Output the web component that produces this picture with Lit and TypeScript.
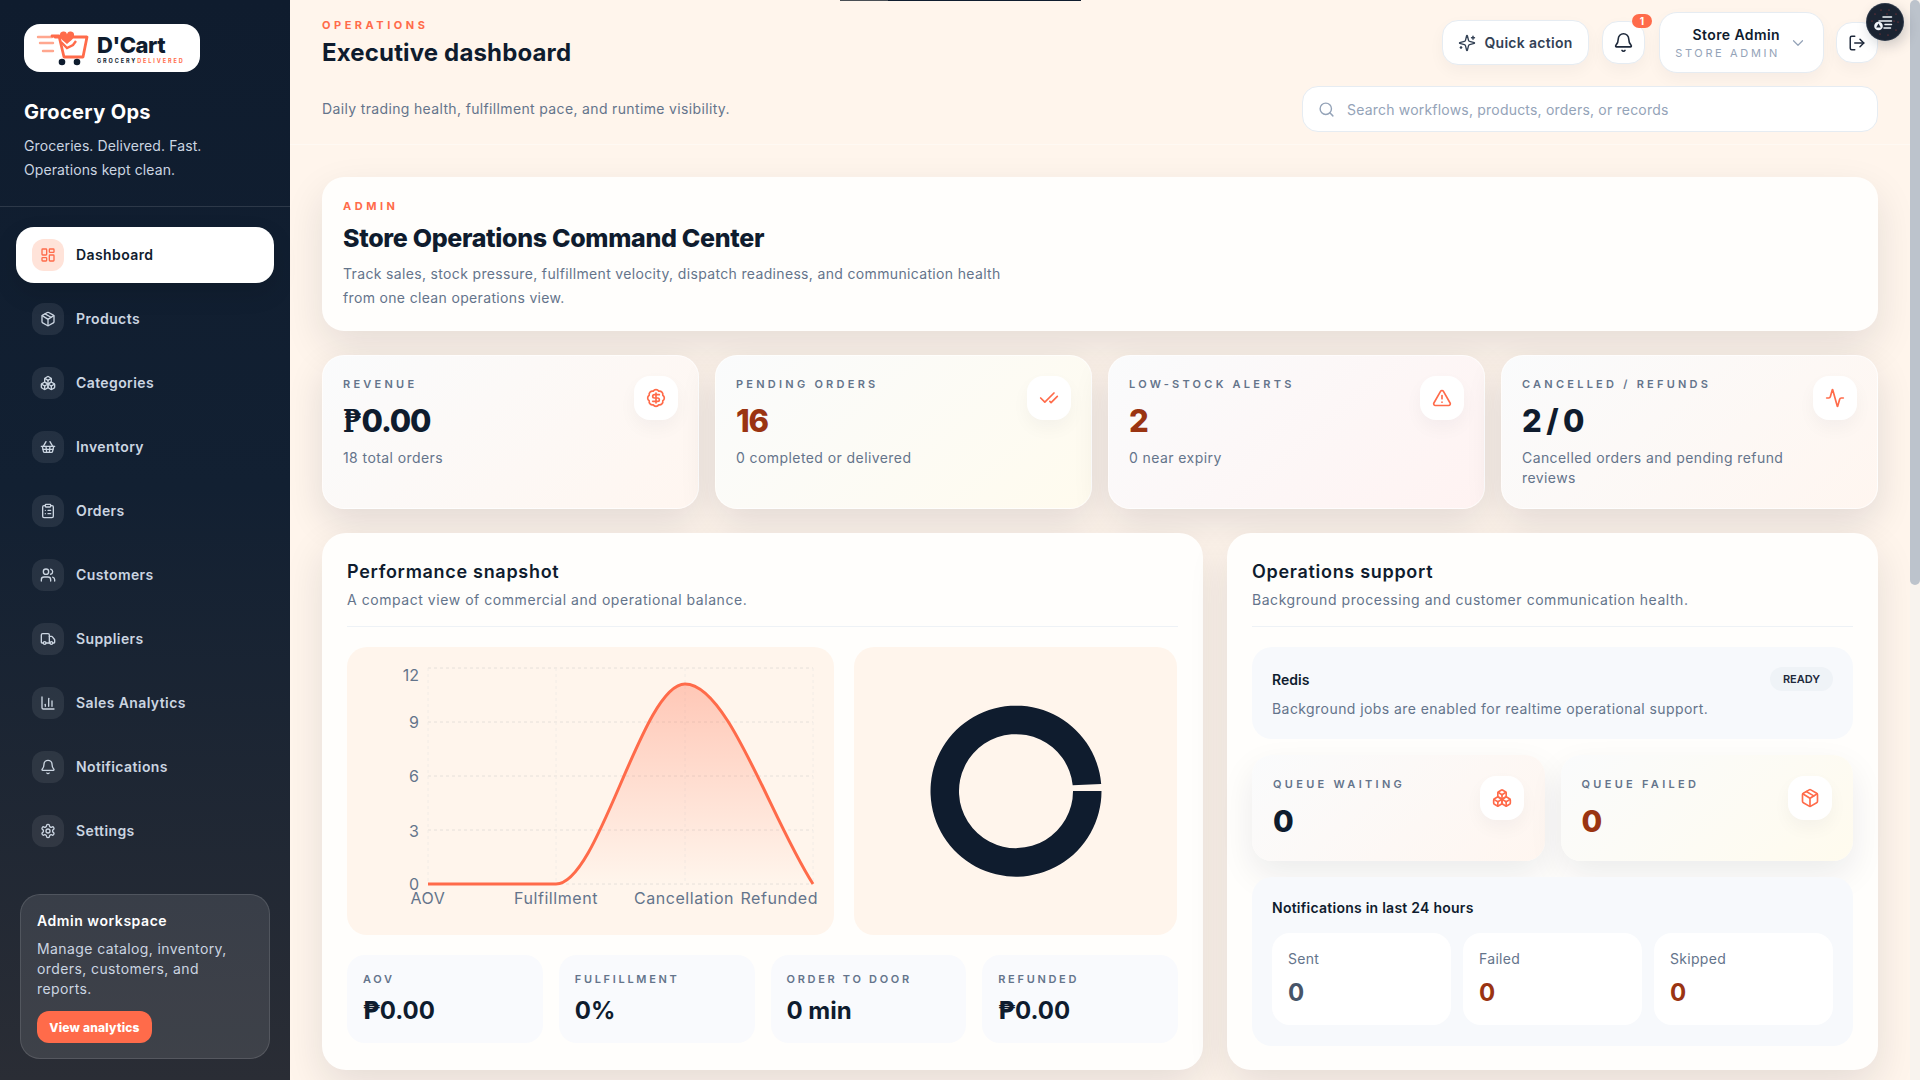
import { LitElement, html, css, svg } from "lit";
import { customElement } from "lit/decorators.js";

const I: Record<string, any> = {
  dashboard: svg`<rect x="3" y="3" width="7" height="9" rx="1"/><rect x="14" y="3" width="7" height="5" rx="1"/><rect x="14" y="12" width="7" height="9" rx="1"/><rect x="3" y="16" width="7" height="5" rx="1"/>`,
  package: svg`<path d="M11 21.73a2 2 0 0 0 2 0l7-4A2 2 0 0 0 21 16V8a2 2 0 0 0-1-1.73l-7-4a2 2 0 0 0-2 0l-7 4A2 2 0 0 0 3 8v8a2 2 0 0 0 1 1.73z"/><path d="M12 22V12"/><path d="m3.3 7 7.703 4.734a2 2 0 0 0 1.994 0L20.7 7"/><path d="m7.5 4.27 9 5.15"/>`,
  boxes: svg`<path d="M2.97 12.92A2 2 0 0 0 2 14.63v3.24a2 2 0 0 0 .97 1.71l3 1.8a2 2 0 0 0 2.06 0L12 19v-5.5l-5-3-4.03 2.42Z"/><path d="m7 16.5-4.74-2.85"/><path d="m7 16.5 5-3"/><path d="M7 16.5v5.17"/><path d="M12 13.5V19l3.97 2.38a2 2 0 0 0 2.06 0l3-1.8a2 2 0 0 0 .97-1.71v-3.24a2 2 0 0 0-.97-1.71L17 10.5l-5 3Z"/><path d="m17 16.5-5-3"/><path d="m17 16.5 4.74-2.85"/><path d="M17 16.5v5.17"/><path d="M7.97 4.42A2 2 0 0 0 7 6.13v4.37l5 3 5-3V6.13a2 2 0 0 0-.97-1.71l-3-1.8a2 2 0 0 0-2.06 0l-3 1.8Z"/><path d="M12 8 7.26 5.15"/><path d="m12 8 4.74-2.85"/><path d="M12 13.5V8"/>`,
  basket: svg`<path d="m15 11-1 9"/><path d="m19 11-4-7"/><path d="M2 11h20"/><path d="m3.5 11 1.6 7.4a2 2 0 0 0 2 1.6h9.8a2 2 0 0 0 2-1.6l1.7-7.4"/><path d="M4.5 15.5h15"/><path d="m5 11 4-7"/><path d="m9 11 1 9"/>`,
  clipboard: svg`<rect width="8" height="4" x="8" y="2" rx="1"/><path d="M16 4h2a2 2 0 0 1 2 2v14a2 2 0 0 1-2 2H6a2 2 0 0 1-2-2V6a2 2 0 0 1 2-2h2"/><path d="M12 11h4"/><path d="M12 16h4"/><path d="M8 11h.01"/><path d="M8 16h.01"/>`,
  users: svg`<path d="M16 21v-2a4 4 0 0 0-4-4H6a4 4 0 0 0-4 4v2"/><circle cx="9" cy="7" r="4"/><path d="M22 21v-2a4 4 0 0 0-3-3.87"/><path d="M16 3.13a4 4 0 0 1 0 7.75"/>`,
  truck: svg`<path d="M14 18V6a2 2 0 0 0-2-2H4a2 2 0 0 0-2 2v11a1 1 0 0 0 1 1h2"/><path d="M15 18H9"/><path d="M19 18h2a1 1 0 0 0 1-1v-3.65a1 1 0 0 0-.22-.624l-3.48-4.35A1 1 0 0 0 17.52 8H14"/><circle cx="17" cy="18" r="2"/><circle cx="7" cy="18" r="2"/>`,
  chart: svg`<path d="M3 3v16a2 2 0 0 0 2 2h16"/><path d="M18 17V9"/><path d="M13 17V5"/><path d="M8 17v-3"/>`,
  bell: svg`<path d="M10.268 21a2 2 0 0 0 3.464 0"/><path d="M3.262 15.326A1 1 0 0 0 4 17h16a1 1 0 0 0 .74-1.673C19.41 13.956 18 12.499 18 8A6 6 0 0 0 6 8c0 4.499-1.411 5.956-2.738 7.326"/>`,
  settings: svg`<path d="M12.22 2h-.44a2 2 0 0 0-2 2v.18a2 2 0 0 1-1 1.73l-.43.25a2 2 0 0 1-2 0l-.15-.08a2 2 0 0 0-2.73.73l-.22.38a2 2 0 0 0 .73 2.73l.15.1a2 2 0 0 1 1 1.72v.51a2 2 0 0 1-1 1.74l-.15.09a2 2 0 0 0-.73 2.73l.22.38a2 2 0 0 0 2.73.73l.15-.08a2 2 0 0 1 2 0l.43.25a2 2 0 0 1 1 1.73V20a2 2 0 0 0 2 2h.44a2 2 0 0 0 2-2v-.18a2 2 0 0 1 1-1.73l.43-.25a2 2 0 0 1 2 0l.15.08a2 2 0 0 0 2.73-.73l.22-.39a2 2 0 0 0-.73-2.73l-.15-.08a2 2 0 0 1-1-1.74v-.5a2 2 0 0 1 1-1.74l.15-.09a2 2 0 0 0 .73-2.73l-.22-.38a2 2 0 0 0-2.73-.73l-.15.08a2 2 0 0 1-2 0l-.43-.25a2 2 0 0 1-1-1.73V4a2 2 0 0 0-2-2z"/><circle cx="12" cy="12" r="3"/>`,
  sparkles: svg`<path d="M9.937 15.5A2 2 0 0 0 8.5 14.063l-6.135-1.582a.5.5 0 0 1 0-.962L8.5 9.936A2 2 0 0 0 9.937 8.5l1.582-6.135a.5.5 0 0 1 .963 0L14.063 8.5A2 2 0 0 0 15.5 9.937l6.135 1.581a.5.5 0 0 1 0 .964L15.5 14.063a2 2 0 0 0-1.437 1.437l-1.582 6.135a.5.5 0 0 1-.963 0z"/><path d="M20 3v4"/><path d="M22 5h-4"/><path d="M4 17v2"/><path d="M5 18H3"/>`,
  dollar: svg`<path d="M3.85 8.62a4 4 0 0 1 4.78-4.77 4 4 0 0 1 6.74 0 4 4 0 0 1 4.78 4.78 4 4 0 0 1 0 6.74 4 4 0 0 1-4.77 4.78 4 4 0 0 1-6.75 0 4 4 0 0 1-4.78-4.77 4 4 0 0 1 0-6.76Z"/><path d="M16 8h-6a2 2 0 1 0 0 4h4a2 2 0 1 1 0 4H8"/><path d="M12 18V6"/>`,
  check: svg`<path d="M18 6 7 17l-5-5"/><path d="m22 10-7.5 7.5L13 16"/>`,
  alert: svg`<path d="m21.73 18-8-14a2 2 0 0 0-3.48 0l-8 14A2 2 0 0 0 4 21h16a2 2 0 0 0 1.73-3"/><path d="M12 9v4"/><path d="M12 17h.01"/>`,
  activity: svg`<path d="M22 12h-2.48a2 2 0 0 0-1.93 1.46l-2.35 8.36a.25.25 0 0 1-.48 0L9.24 2.18a.25.25 0 0 0-.48 0l-2.35 8.36A2 2 0 0 1 4.49 12H2"/>`,
  search: svg`<circle cx="11" cy="11" r="8"/><path d="m21 21-4.3-4.3"/>`,
  chevron: svg`<path d="m6 9 6 6 6-6"/>`,
  logout: svg`<path d="M9 21H5a2 2 0 0 1-2-2V5a2 2 0 0 1 2-2h4"/><path d="m16 17 5-5-5-5"/><path d="M21 12H9"/>`,
};
const ico = (n: string, s = 16, w = 2) =>
  html`<svg width=${s} height=${s} viewBox="0 0 24 24" fill="none" stroke="currentColor" stroke-width=${w} stroke-linecap="round" stroke-linejoin="round">${I[n]}</svg>`;

const NAV = [
  ["Dashboard", "dashboard"], ["Products", "package"], ["Categories", "boxes"], ["Inventory", "basket"],
  ["Orders", "clipboard"], ["Customers", "users"], ["Suppliers", "truck"], ["Sales Analytics", "chart"],
  ["Notifications", "bell"], ["Settings", "settings"],
];
const KPI = [
  { l: "REVENUE", v: "₱0.00", s: "18 total orders", i: "dollar", c: "", t: "t1" },
  { l: "PENDING ORDERS", v: "16", s: "0 completed or delivered", i: "check", c: "warn", t: "t2" },
  { l: "LOW-STOCK ALERTS", v: "2", s: "0 near expiry", i: "alert", c: "warn", t: "t3" },
  { l: "CANCELLED / REFUNDS", v: "2 / 0", s: "Cancelled orders and pending refund reviews", i: "activity", c: "", t: "t1" },
];
const MET = [["AOV", "₱0.00"], ["FULFILLMENT", "0%"], ["ORDER TO DOOR", "0 min"], ["REFUNDED", "₱0.00"]];

@customElement("app-root")
export class AppRoot extends LitElement {
  static styles = css`
    :host { display: block; width: 100%; height: 100vh; overflow: hidden; font-family: Inter, "Noto Sans", sans-serif; color: #0f1c2e; }
    * { box-sizing: border-box; }
    .shell { display: flex; height: 1080px; position: relative; overflow: hidden; }
    .side { width: 290px; flex: none; height: 1080px; background: linear-gradient(180deg, #0f1c2e 0%, #122032 45%, #2a2d35 100%); display: flex; flex-direction: column; color: #fff; position: relative; z-index: 2; }
    .brand { padding: 24px 24px 0; height: 207px; border-bottom: 1px solid rgba(255,255,255,.12); }
    .logo { width: 176px; height: 48px; background: #fff; border-radius: 16px; position: relative; overflow: hidden; display: flex; }
    .logo svg { flex: none; }
    .lt { margin-left: 3px; display: flex; flex-direction: column; }
    .lname { font-size: 22px; font-weight: 800; color: #0f1c2e; line-height: 26px; margin-top: 8px; letter-spacing: -.5px; }
    .lsub { font-size: 5.5px; font-weight: 700; letter-spacing: 1.9px; white-space: nowrap; line-height: 8px; margin-top: -1px; color: #0f1c2e; }
    .lsub b { color: #ff6b4a; font-weight: 700; }
    .bname { margin: 25px 0 0; font-size: 20px; font-weight: 700; line-height: 30px; letter-spacing: .35px; }
    .bdesc { margin: 7px 0 0; font-size: 14px; line-height: 24px; color: #cbd5e1; letter-spacing: .1px; }
    nav { padding: 20px 16px 0; display: flex; flex-direction: column; gap: 8px; }
    .ni { height: 56px; border-radius: 18px; padding: 0 16px; display: flex; align-items: center; gap: 12px; font-size: 14px; font-weight: 600; color: #cbd5e1; letter-spacing: .4px; }
    .ni .lab { margin-top: -2px; }
    .ni .box { width: 32px; height: 32px; border-radius: 12px; display: grid; place-items: center; background: rgba(255,255,255,.08); }
    .ni.on { background: #fff; color: #0f1c2e; box-shadow: 0 10px 24px rgba(0,0,0,.12); }
    .ni.on .box { background: #ffe3d9; color: #ff6b4a; }
    .work { margin: 35px 20px 0; height: 165px; border-radius: 20px; border: 1px solid rgba(255,255,255,.12); background: rgba(255,255,255,.1); padding: 16px; }
    .work h4 { margin: 0; font-size: 14px; font-weight: 600; line-height: 20px; letter-spacing: .55px; }
    .work p { margin: 8px 0 0; font-size: 14px; line-height: 20px; color: #cbd5e1; max-width: 205px; letter-spacing: .4px; }
    .cta { display: inline-flex; margin-top: 12px; height: 32px; width: 115px; align-items: center; justify-content: center; border-radius: 12px; background: #ff6b4a; font-size: 12px; font-weight: 800; color: #fff; letter-spacing: .2px; }
    .main { flex: 1; min-width: 0; height: 1080px; overflow: hidden; background: #fff5ec; }
    .sbar { width: 10px; flex: none; height: 1080px; background: #f8f3ee; }
    .thumb { height: 585px; background: #bcc3cc; border-radius: 5px; }
    header { height: 145px; border-bottom: 1px solid #fff9f3; padding: 0 32px; position: relative; background: #fff5ec; }
    .hrow { display: flex; justify-content: space-between; height: 86px; }
    .eyebrow { font-size: 11px; font-weight: 700; letter-spacing: .32em; color: #ff6b4a; line-height: 16px; }
    .hl { padding-top: 17px; }
    h1 { margin: 4px 0 0; font-size: 24px; font-weight: 700; line-height: 32px; letter-spacing: .15px; color: #0f1c2e; }
    .hr { display: flex; align-items: flex-start; }
    .btn { background: #fff; border: 1px solid #e6ecf2; display: flex; align-items: center; justify-content: center; box-shadow: 0 6px 16px rgba(15,28,46,.04); }
    .qa { width: 147px; height: 45px; border-radius: 16px; margin-top: 20px; gap: 8px; font-size: 14px; font-weight: 600; color: #334155; letter-spacing: .3px; }
    .bell { width: 43px; height: 43px; border-radius: 16px; margin: 21px 0 0 13px; position: relative; color: #1e293b; }
    .badge { position: absolute; left: 29px; top: -8px; width: 20px; height: 14px; border-radius: 7px; background: #ff6b4a; color: #fff; font-size: 10px; font-weight: 700; text-align: center; line-height: 14px; }
    .who { width: 165px; height: 61px; border-radius: 18px; margin: 12px 0 0 14px; padding: 0 10px 0 16px; justify-content: flex-start; gap: 9px; }
    .wt { display: flex; flex-direction: column; align-items: flex-end; width: 104px; flex: none; }
    .wn { font-size: 14px; font-weight: 600; line-height: 20px; color: #0f1c2e; letter-spacing: .4px; }
    .wr { font-size: 11px; line-height: 16px; letter-spacing: .24em; color: #94a3b8; white-space: nowrap; }
    .chev { color: #94a3b8; display: flex; flex: none; }
    .out { width: 42px; height: 41px; border-radius: 16px; margin: 22px 0 0 12px; color: #1e293b; }
    .srow { display: flex; justify-content: space-between; align-items: center; height: 46px; }
    .sub { font-size: 14px; line-height: 20px; color: #64748b; letter-spacing: .35px; }
    .search { width: 576px; height: 46px; border-radius: 16px; background: #fff; border: 1px solid #e6ecf2; display: flex; align-items: center; padding: 0 15px; gap: 12px; color: #94a3b8; font-size: 14px; letter-spacing: .2px; }
    .float { position: absolute; left: 1866.5px; top: 4px; width: 36px; height: 36px; border-radius: 50%; background: #1b2432; box-shadow: 0 0 0 1px #2f3a4a, 3px 5px 14px rgba(15,28,46,.22); z-index: 5; }
    .float svg { display: block; }
    .topline { position: absolute; left: 840px; top: 0; width: 241px; height: 1px; background: linear-gradient(90deg, #4a4f55 0, #4a4f55 48px, #0f1c2e 48px); z-index: 5; }
    .body { padding: 32px 32px 0; display: flex; flex-direction: column; gap: 24px; }
    .card { background: #fffefc; box-shadow: 0 16px 40px rgba(15,28,46,.11); }
    .hero { height: 154px; border-radius: 22px; padding: 21px 21px; }
    h2 { margin: 8px 0 0; font-size: 25px; font-weight: 800; line-height: 32px; letter-spacing: -.32px; color: #0f1c2e; }
    .hero p { margin: 8px 0 0; font-size: 14px; line-height: 24px; color: #64748b; max-width: 680px; letter-spacing: .34px; }
    .kpis { display: grid; grid-template-columns: repeat(4, 1fr); gap: 16px; }
    .kpi { height: 154px; border-radius: 22px; padding: 20px; display: flex; justify-content: space-between; box-shadow: 0 14px 36px rgba(15,28,46,.12); border: 1px solid rgba(255,255,255,.7); }
    .t1 { background: linear-gradient(140deg, #fafbfc, #fff6f0); }
    .t2 { background: linear-gradient(140deg, #fafbfc, #fffbee); }
    .t3 { background: linear-gradient(140deg, #fafbfc, #fff3f2); }
    .kl { font-size: 11px; font-weight: 600; letter-spacing: .295em; line-height: 16px; color: #64748b; white-space: nowrap; }
    .kv { font-size: 31px; font-weight: 800; line-height: 40px; margin-top: 9px; color: #0f1c2e; letter-spacing: -1.2px; }
    .warn { color: #9a3412; }
    .ks { font-size: 14px; line-height: 20px; color: #64748b; margin-top: 7px; letter-spacing: .42px; }
    .peso { font-family: "DejaVu Serif", serif; display: inline-block; width: .6em; transform: scaleX(.75); transform-origin: left center; }
    .peso2 { font-family: "DejaVu Sans", sans-serif; font-weight: 700; }
    .kbox { flex: none; width: 44px; height: 44px; border-radius: 16px; background: #fff; color: #ff6b4a; display: grid; place-items: center; box-shadow: 0 8px 18px rgba(15,28,46,.04); }
    .panels { display: grid; grid-template-columns: 881px 651px; gap: 24px; }
    .panel { height: 537px; border-radius: 24px; padding: 25px 25px; }
    h3 { margin: 0; font-size: 18px; font-weight: 600; line-height: 28px; color: #0f1c2e; letter-spacing: .7px; }
    .pd { font-size: 14px; line-height: 20px; color: #64748b; margin-top: 4px; padding-bottom: 16px; border-bottom: 1px solid #eef2f6; letter-spacing: .55px; }
    .charts { display: grid; grid-template-columns: 486.5px 323.5px; gap: 20px; margin-top: 20px; }
    .cbox { height: 288px; border-radius: 20px; background: #fff5ec; overflow: hidden; }
    .cbox svg { display: block; }
    .mets { display: grid; grid-template-columns: repeat(4, 1fr); gap: 16px; margin-top: 20px; }
    .met { height: 88px; border-radius: 18px; background: #f9fafd; padding: 16px; }
    .ml { font-size: 11px; font-weight: 600; letter-spacing: .245em; line-height: 16px; color: #64748b; white-space: nowrap; }
    .mv { font-size: 24px; font-weight: 700; line-height: 32px; margin-top: 8px; color: #0f1c2e; }
    .stack { display: flex; flex-direction: column; gap: 16px; margin-top: 20px; }
    .redis { height: 92px; border-radius: 20px; background: #f7f9fc; padding: 20px; }
    .rt { display: flex; justify-content: space-between; align-items: center; height: 24px; font-size: 14px; font-weight: 600; color: #0f1c2e; }
    .pill { width: 63px; height: 24px; border-radius: 12px; background: #eff3f7; font-size: 11px; font-weight: 600; display: grid; place-items: center; color: #1e293b; }
    .rd { font-size: 14px; line-height: 20px; color: #64748b; margin-top: 8px; letter-spacing: .43px; }
    .qs { display: grid; grid-template-columns: 1fr 1fr; gap: 16px; }
    .q { height: 106px; border-radius: 20px; padding: 21px 21px; display: flex; justify-content: space-between; box-shadow: 0 14px 34px rgba(15,28,46,.08); }
    .q .kl { letter-spacing: .3em; }
    .q .kv { margin-top: 9px; font-size: 30px; }
    .notes { height: 169px; border-radius: 20px; background: #f7f9fc; padding: 20px; }
    .nt { font-size: 14px; font-weight: 600; line-height: 20px; margin-top: 1px; color: #0f1c2e; letter-spacing: .25px; }
    .ns { display: grid; grid-template-columns: repeat(3, 1fr); gap: 12px; margin-top: 15px; }
    .nc { height: 92px; border-radius: 18px; background: #fff; padding: 16px; }
    .nl { font-size: 14px; line-height: 20px; color: #64748b; letter-spacing: .3px; }
    .nv { font-size: 24px; font-weight: 700; line-height: 32px; margin-top: 8px; color: #475569; }
    .nv.warn { color: #9a3412; }
  `;

  money(v: string, cls: string) {
    return v.startsWith("₱") ? html`<span class=${cls}>₱</span>${v.slice(1)}` : v;
  }

  logo() {
    return svg`<svg width="70" height="48" viewBox="0 0 70 48" fill="none">
      <path d="M14 13h14M16 19h13M19 27h10" stroke="#ffa78f" stroke-width="2.4" stroke-linecap="round"/>
      <path d="M28 12h7l5 21h19l4-20H31" stroke="#ff6b4a" stroke-width="2.8" stroke-linejoin="round" stroke-linecap="round"/>
      <path d="M37 18l6 6 6-3 3-4" stroke="#ff6b4a" stroke-width="2.4" fill="none"/>
      <path d="M43 20c-5-4-7-6-7-8.500a3.500 3.500 0 0 1 7-1 3.500 3.500 0 0 1 7 1c0 2.500-2 4.500-7 8.500z" fill="#ff6b4a"/>
      <circle cx="38" cy="38" r="3.300" fill="#0f1c2e"/><circle cx="53" cy="38" r="3.300" fill="#0f1c2e"/>
    </svg>`;
  }

  chart() {
    const ox = 347, oy = 647;
    const X = [428, 556, 685, 813].map((v) => v - ox);
    const Y = [668, 722, 776, 830, 884].map((v) => v - oy);
    const yl = ["12", "9", "6", "3", "0"];
    const yt = [28, 75, 129, 184, 237];
    const pk = 37;
    const line = `M${X[0]} ${Y[4]} L${X[1]} ${Y[4]} C${X[1] + 43} ${Y[4]} ${X[2] - 43} ${pk} ${X[2]} ${pk} C${X[2] + 43} ${pk} ${X[3] - 43} ${Y[4] - 67} ${X[3]} ${Y[4]}`;
    return svg`<svg width="486.5" height="288" viewBox="0 0 486.5 288">
      <defs><linearGradient id="fg" x1="0" y1="0" x2="0" y2="1"><stop offset="0" stop-color="#ff6b4a" stop-opacity=".33"/><stop offset="1" stop-color="#ff6b4a" stop-opacity="0"/></linearGradient></defs>
      ${Y.map((y) => svg`<line x1=${X[0]} x2=${X[3]} y1=${y} y2=${y} stroke="#e6e0da" stroke-width="1" stroke-dasharray="3 3"/>`)}
      ${X.map((x) => svg`<line x1=${x} x2=${x} y1=${Y[0]} y2=${Y[4]} stroke="#f2ece6" stroke-width="1" stroke-dasharray="3 3"/>`)}
      <path d="${line} Z" fill="url(#fg)"/>
      <path d=${line} fill="none" stroke="#ff6b4a" stroke-width="3" stroke-linejoin="round"/>
      <g font-size="16" fill="#64748b" font-family="Inter, sans-serif">
        ${yl.map((t, i) => svg`<text x="72" y=${yt[i]} dominant-baseline="central" text-anchor="end">${t}</text>`)}
        <g letter-spacing=".55">
          <text x=${X[0]} y="250.500" dominant-baseline="central" text-anchor="middle">AOV</text>
          <text x=${X[1]} y="250.500" dominant-baseline="central" text-anchor="middle">Fulfillment</text>
          <text x=${X[2] - 1} y="250.500" dominant-baseline="central" text-anchor="middle">Cancellation</text>
          <text x="471" y="250.500" dominant-baseline="central" text-anchor="end">Refunded</text>
        </g>
      </g>
    </svg>`;
  }

  donut() {
    const cx = 162, cy = 144;
    return svg`<svg width="323.500" height="288" viewBox="0 0 323.500 288">
      <path fill="#0f1c2e" d="M${cx + 85.5} ${cy} A85.500 85.500 0 1 1 ${cx + 85.2} ${cy - 7} L${cx + 56.7} ${cy - 5.7} A57 57 0 1 0 ${cx + 57} ${cy} Z"/>
    </svg>`;
  }

  render() {
    const dots = [[8,10],[14,6],[22,6],[29,10],[31,18],[29,26],[21,31],[13,30],[5,17],[20,10],[27,17]];
    return html`<div class="shell">
      <aside class="side">
        <div class="brand">
          <div class="logo">${this.logo()}<div class="lt"><div class="lname">D'Cart</div><div class="lsub">GROCERY<b>DELIVERED</b></div></div></div>
          <div class="bname">Grocery Ops</div>
          <div class="bdesc">Groceries. Delivered. Fast.<br />Operations kept clean.</div>
        </div>
        <nav>
          ${NAV.map(([n, i], k) => html`<div class="ni ${k === 0 ? "on" : ""}"><span class="box">${ico(i, 16)}</span><span class="lab">${n}</span></div>`)}
        </nav>
        <div class="work">
          <h4>Admin workspace</h4>
          <p>Manage catalog, inventory, orders, customers, and reports.</p>
          <span class="cta">View analytics</span>
        </div>
      </aside>
      <main class="main">
        <header>
          <div class="hrow">
            <div class="hl"><div class="eyebrow">OPERATIONS</div><h1>Executive dashboard</h1></div>
            <div class="hr">
              <div class="btn qa">${ico("sparkles", 18, 1.8)}Quick action</div>
              <div class="btn bell">${ico("bell", 21, 1.8)}<span class="badge">1</span></div>
              <div class="btn who"><div class="wt"><span class="wn">Store Admin</span><span class="wr">STORE ADMIN</span></div><span class="chev">${ico("chevron", 18, 1.6)}</span></div>
              <div class="btn out">${ico("logout", 18)}</div>
            </div>
          </div>
          <div class="srow">
            <div class="sub">Daily trading health, fulfillment pace, and runtime visibility.</div>
            <div class="search">${ico("search", 17)}<span>Search workflows, products, orders, or records</span></div>
          </div>
        </header>
        <div class="body">
          <section class="card hero">
            <div class="eyebrow">ADMIN</div>
            <h2>Store Operations Command Center</h2>
            <p>Track sales, stock pressure, fulfillment velocity, dispatch readiness, and communication health from one clean operations view.</p>
          </section>
          <section class="kpis">
            ${KPI.map((k) => html`<div class="kpi ${k.t}">
              <div><div class="kl">${k.l}</div><div class="kv ${k.c}">${this.money(k.v, "peso")}</div><div class="ks">${k.s}</div></div>
              <div class="kbox">${ico(k.i, 20)}</div>
            </div>`)}
          </section>
          <section class="panels">
            <div class="card panel">
              <h3>Performance snapshot</h3>
              <div class="pd">A compact view of commercial and operational balance.</div>
              <div class="charts"><div class="cbox">${this.chart()}</div><div class="cbox">${this.donut()}</div></div>
              <div class="mets">
                ${MET.map(([l, v]) => html`<div class="met"><div class="ml">${l}</div><div class="mv">${this.money(v, "peso2")}</div></div>`)}
              </div>
            </div>
            <div class="card panel">
              <h3>Operations support</h3>
              <div class="pd">Background processing and customer communication health.</div>
              <div class="stack">
                <div class="redis">
                  <div class="rt"><span>Redis</span><span class="pill">READY</span></div>
                  <div class="rd">Background jobs are enabled for realtime operational support.</div>
                </div>
                <div class="qs">
                  <div class="q t1"><div><div class="kl">QUEUE WAITING</div><div class="kv">0</div></div><div class="kbox">${ico("boxes", 20)}</div></div>
                  <div class="q t2"><div><div class="kl">QUEUE FAILED</div><div class="kv warn">0</div></div><div class="kbox">${ico("package", 20)}</div></div>
                </div>
                <div class="notes">
                  <div class="nt">Notifications in last 24 hours</div>
                  <div class="ns">
                    <div class="nc"><div class="nl">Sent</div><div class="nv">0</div></div>
                    <div class="nc"><div class="nl">Failed</div><div class="nv warn">0</div></div>
                    <div class="nc"><div class="nl">Skipped</div><div class="nv warn">0</div></div>
                  </div>
                </div>
              </div>
            </div>
          </section>
        </div>
      </main>
      <div class="sbar"><div class="thumb"></div></div>
      <div class="topline"></div>
      <div class="float">
        <svg width="36" height="36" viewBox="0 0 36 36" fill="none" stroke="#f1f5f9" stroke-width="1.500" stroke-linecap="round">
          ${dots.map(([x, y]) => svg`<circle cx=${x} cy=${y} r=".6" fill="#b23a3a" stroke="none"/>`)}
          <path d="M16 13h8.500M12 17h12.500M18 20.500h6.500M17 24h6.500"/>
          <circle cx="11.500" cy="22" r="4.300" fill="#f1f5f9" stroke="none"/>
          <path d="M11.500 19.500l2.300 4h-4.600z" fill="#1b2432" stroke="none"/>
        </svg>
      </div>
    </div>`;
  }
}
